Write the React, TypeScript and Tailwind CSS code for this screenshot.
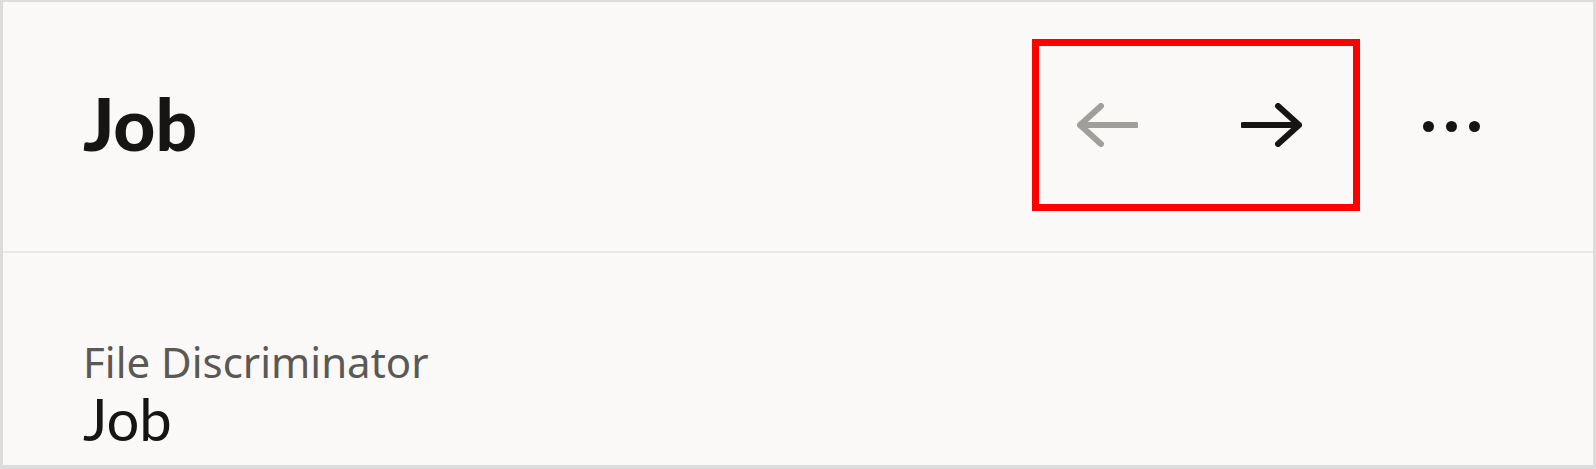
import React from "react";

function Arrow({ dir, color }: { dir: "left" | "right"; color: string }) {
  const d =
    dir === "left"
      ? "M4 22 H60 M25 3 L4 22 L25 41"
      : "M2 22 H58 M37 3 L58 22 L37 41";
  return (
    <svg width="62" height="44" viewBox="0 0 62 44" fill="none">
      <path d={d} stroke={color} strokeWidth="6" strokeLinecap="round" strokeLinejoin="round" />
    </svg>
  );
}

export default function App() {
  return (
    <div
      className="w-[1596px] h-[469px] bg-[#faf9f8] border-[#dcdcdc] border-l-[3px] border-t-[2px] border-r-[3px] border-b-[4px] flex flex-col overflow-hidden"
      style={{ fontFamily: "'Noto Sans', 'Open Sans', sans-serif" }}
    >
      <div className="h-[251px] shrink-0 flex items-center border-b-[2px] border-[#ebe9e7] pl-[80px] pr-[113px]">
        <div
          className="text-[73px] leading-none font-black text-[#161513] pb-[6px]"
          style={{ fontFamily: "Lato, 'Noto Sans', sans-serif" }}
        >
          Job
        </div>
        <div className="ml-auto flex items-center">
          <div className="w-[328px] h-[172px] border-[7px] border-[#ff0000] flex items-center pl-[37px] gap-[103px] mt-[-4px]">
            <Arrow dir="left" color="#a19f9c" />
            <Arrow dir="right" color="#161513" />
          </div>
          <div className="ml-[63px] flex items-center gap-[12px]">
            <span className="w-[11px] h-[11px] rounded-full bg-[#161513]" />
            <span className="w-[11px] h-[11px] rounded-full bg-[#161513]" />
            <span className="w-[11px] h-[11px] rounded-full bg-[#161513]" />
          </div>
        </div>
      </div>
      <div className="pl-[80px] pt-[86px] flex flex-col">
        <div className="text-[42px] leading-[46px] text-[#5b5955]">File Discriminator</div>
        <div
          className="text-[58px] leading-[68px] text-[#161513]"
          style={{ fontFamily: "Lato, 'Noto Sans', sans-serif" }}
        >
          Job
        </div>
      </div>
    </div>
  );
}
